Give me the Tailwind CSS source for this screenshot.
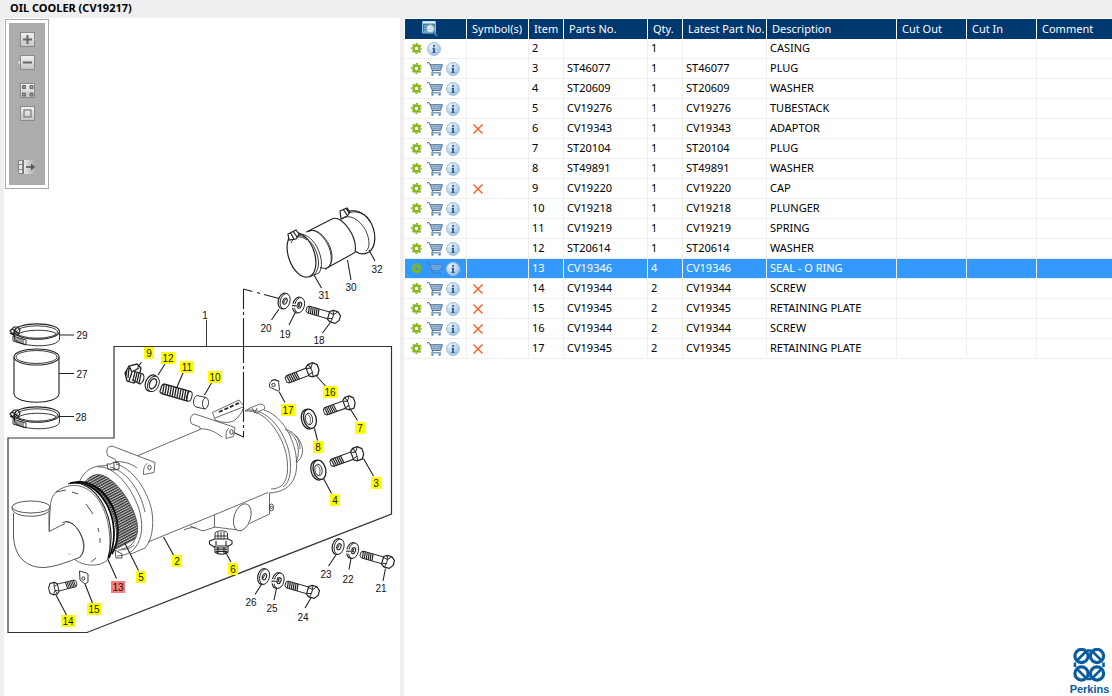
<!DOCTYPE html>
<html lang="en">
  <head>
    <meta charset="UTF-8" />
    <meta name="viewport" content="width=device-width, initial-scale=1.0" />
    <title>OIL COOLER (CV19217)</title>
    <script src="https://cdn.jsdelivr.net/npm/@tailwindcss/browser@4"></script>
  </head>
  <body class="bg-[#efefef] font-['Noto_Sans',sans-serif] text-[11px] text-black">
    <!-- shared icons -->
    <svg class="absolute size-0">
      <defs>
        <linearGradient id="btnFill" x1="0" y1="0" x2="0" y2="1">
          <stop offset="0" stop-color="#f2f2f2" />
          <stop offset="1" stop-color="#c4c4c4" />
        </linearGradient>
        <radialGradient id="infoFill" cx="0.35" cy="0.3" r="0.8">
          <stop offset="0" stop-color="#eef6fc" />
          <stop offset="1" stop-color="#94bcdc" />
        </radialGradient>
        <linearGradient id="fade" x1="0" y1="0" x2="1" y2="0">
          <stop offset="0" stop-color="#ededed" />
          <stop offset="1" stop-color="#acacac" />
        </linearGradient>
      </defs>
      <symbol id="gear" viewBox="0 0 10 10">
        <circle cx="5" cy="5" r="2.7" fill="none" stroke="#83b81a" stroke-width="2.2" />
        <circle cx="5" cy="5" r="4.3" fill="none" stroke="#83b81a" stroke-width="1.3" stroke-dasharray="1.9 1.477" stroke-dashoffset="1" />
      </symbol>
      <symbol id="cart" viewBox="0 0 16 14">
        <path d="M3 2.5h12.5l-2 6H5.5z" fill="#c3d8ee" />
        <path d="M0 .7h2.2L5.6 9l-1 1.8h9.4M3 2.7h12.5l-2 5.8H5.4" fill="none" stroke="#4c7098" />
        <path d="M3.8 4.7h11M4.6 6.6h9.4M6.5 2.7v5.8M8.8 2.7v5.8M11 2.7v5.8M13.2 2.7l-.4 5.8" fill="none" stroke="#6f94bf" stroke-width=".8" />
        <circle cx="5.4" cy="12.6" r="1.2" fill="#3f8fd0" />
        <circle cx="12.6" cy="12.6" r="1.2" fill="#3f8fd0" />
      </symbol>
      <symbol id="info" viewBox="0 0 14 14">
        <circle cx="7" cy="7" r="6.5" fill="url(#infoFill)" stroke="#a3c3dd" />
        <path d="M6 3h2v1.8H6zM5.3 5.8H8v4.2h.7v1H5.3v-1H6V6.8h-.7z" fill="#33639c" />
      </symbol>
      <symbol id="cross" viewBox="0 0 10 10">
        <path d="M.5.5l9 9M9.5.5l-9 9" fill="none" stroke="#ff5a1f" stroke-width="1.4" />
      </symbol>
    </svg>

    <div class="flex flex-col min-h-screen">
      <header class="h-[18px] pl-[10px] leading-4">
        <h1 class="font-bold">OIL COOLER (CV19217)</h1>
      </header>

      <main class="flex grow">
        <!-- drawing -->
        <section class="relative w-[400px] shrink-0 border-l-4 border-[#efefef] bg-white">
          <div class="absolute left-px top-px z-10 border border-[#a9a9a9] bg-white p-[3px]">
            <div class="flex w-9 flex-col items-center bg-[#acacac] pt-2 pb-2.5">
              <button class="mb-[7px] h-4" aria-label="Zoom in">
                <svg class="h-4 w-[18px]" viewBox="0 0 18 16">
                  <path d="M15 5l3 3-3 3z" fill="#e2e2e2" />
                  <rect x="2.5" y="1.5" width="14" height="14" fill="url(#btnFill)" stroke="#8a8a8a" />
                  <path d="M9.5 4v9M5 8.5h9" stroke="#666" stroke-width="2" />
                </svg>
              </button>
              <button class="mb-[13px] h-4" aria-label="Zoom out">
                <svg class="h-4 w-[18px]" viewBox="0 0 18 16">
                  <path d="M3 5.5l-3 3 3 3z" fill="#e2e2e2" />
                  <rect x="2.5" y="1.5" width="14" height="14" fill="url(#btnFill)" stroke="#8a8a8a" />
                  <path d="M5 8.5h9" stroke="#666" stroke-width="2" />
                </svg>
              </button>
              <button class="mb-[7px] h-4" aria-label="Fit to window">
                <svg class="h-4 w-[18px]" viewBox="0 0 18 16">
                  <rect x="2.5" y=".5" width="14" height="14" fill="url(#btnFill)" stroke="#8a8a8a" />
                  <path d="M4.5 2.5h3v3h-3zM12 2.5h3v3h-3zM4.5 10h3v3h-3zM12 10h3v3h-3z" fill="#999" stroke="#666" />
                </svg>
              </button>
              <button class="mb-[37px] h-4" aria-label="Actual size">
                <svg class="h-4 w-[18px]" viewBox="0 0 18 16">
                  <rect x="2.5" y=".5" width="14" height="14" fill="url(#btnFill)" stroke="#8a8a8a" />
                  <rect x="6" y="4" width="7" height="7" fill="none" stroke="#666" />
                </svg>
              </button>
              <button class="h-4" aria-label="Hide list">
                <svg class="h-4 w-[18px]" viewBox="0 0 18 16">
                  <rect x="5" y="1" width="12" height="14" fill="url(#fade)" />
                  <path d="M.5 1.5h4v13h-4zM.5 5.5h4M.5 10.5h4" fill="#e8e8e8" stroke="#858585" />
                  <path d="M5.5 1v14" stroke="#777" />
                  <path d="M8 8h6" stroke="#555" stroke-width="1.6" />
                  <path d="M13 4.5L17 8l-4 3.5z" fill="#555" />
                </svg>
              </button>
            </div>
          </div>

          <svg class="block w-full" viewBox="4 18 396 678" fill="none" stroke="#222" stroke-width="0.9" font-family="Liberation Sans, Arial, sans-serif" font-size="10">
            <defs>
              <g id="bolt">
                <path d="M0 -2L2 -3.5H25V3.5H2L0 2z" fill="#fff" />
                <path d="M2 -3.5l1 7M4 -3.5l1 7M6 -3.5l1 7M8 -3.5l1 7M10 -3.5l1 7M12 -3.5l1 7" stroke-width="1.2" />
                <path d="M23 -4l3 -2h5l3.500 3v5l-3 4h-5.500l-3 -2z" fill="#fff" stroke-width="1.2" />
                <path d="M26 -6l1.500 4v4l-1 4M27.500 -2l-4 -1M27.500 2l-4 1M31 -6l-3.500 4" />
              </g>
              <g id="washer">
                <ellipse rx="5.2" ry="8" fill="#fff" stroke-width="1.2" transform="translate(-1 0) rotate(14)" />
                <ellipse rx="4.8" ry="7.8" fill="#fff" transform="translate(.6 .2) rotate(14)" />
                <ellipse cx=".5" rx="2" ry="3.2" transform="rotate(20)" stroke-width="1.1" />
                <path d="M1 -2l-2 4" />
              </g>
              <g id="splitWasher">
                <use href="#washer" />
                <path d="M-7 -1l6 2M-7 2l5 1" stroke="#fff" stroke-width="1.5" />
                <path d="M-6 .5l6 .5M-1 -3l2 5" />
              </g>
              <g id="ring">
                <ellipse cx="-1" rx="6.500" ry="10" fill="#fff" stroke-width="1.3" transform="rotate(-14)" />
                <ellipse cx="1" rx="6.200" ry="9.800" fill="#fff" stroke-width="1.3" transform="rotate(-14)" />
                <ellipse rx="3.600" ry="5.800" transform="rotate(-10)" />
                <path d="M-1.500 -4.500c3 1 4 6 2 9.500" stroke-width=".7" />
              </g>
              <g id="clamp">
                <path d="M14.500 332v7c6 9 44 9 45 0v-8" fill="#fff" />
                <ellipse cx="37" cy="331.500" rx="22.500" ry="7.700" fill="#fff" stroke-width="1.2" />
                <ellipse cx="37" cy="332" rx="20.500" ry="6.200" />
                <path d="M18 334.500c5 -5.500 32 -5.500 38 -1" />
                <path d="M10 331l4 -4h4l2 3 -2 5h-4zM12 329l6 4M13 334l3 -6M10 333l5 3" stroke-width="1.2" />
                <path d="M13 336l13 4v5l-13 -4zM15 337v4.500M17 337.500v5M19 338v5M21 338.500v5M23 339v5" />
              </g>
              <pattern id="hatch" width="2.4" height="2.4" patternUnits="userSpaceOnUse" patternTransform="rotate(62)">
                <rect width="2.400" height="2.400" fill="#ddd" stroke="none" />
                <path d="M.6 0v2.400" stroke="#222" stroke-width="1.3" />
                <path d="M0 .6h2.400" stroke="#555" stroke-width=".5" />
              </pattern>
            </defs>

            <!-- boundary -->
            <path d="M114 346.500H391.500V514L87 632.500H8V438h106z" stroke="#333" stroke-width="1.2" />
            <path d="M206.500 320v26" />

            <!-- hose and clamps 27-29 -->
            <use href="#clamp" />
            <path d="M14 357v37c2 11 43 11 45 0v-37" fill="#fff" stroke-width="1.1" />
            <ellipse cx="36.500" cy="357" rx="22.500" ry="8" fill="#fff" stroke-width="1.1" />
            <ellipse cx="36.500" cy="357" rx="20.500" ry="6.500" />
            <use href="#clamp" y="83" />

            <!-- hose and clamps 30-32 -->
            <path d="M343 217c8 -8 20 -7 27 4c7 12 6 26 -1 31c-5 3 -10 2 -14 -1" stroke-width="1.2" />
            <path d="M342 219c9 -7 20 4 24 12c4 9 4 17 0 20" />
            <path d="M341 217c9 -11 22 -7 29 5" />
            <path d="M340 211l7 -3 3 4 -3 4 -6 3zM343 209l4 6M346 208l3 5" stroke-width="1.2" fill="#fff" />
            <path d="M306.500 232L333 218.500c9 -3 25 18 22 34L325 269" fill="#fff" stroke-width="1.1" />
            <path d="M306.500 232c8 -5 16 3 21 12c5 10 5 20 0 24M309 231.500c7 -4 15 4 20 13c4 9 4 17 0 23M320 267.500l7 1.500" />
            <ellipse cx="301.500" cy="255" rx="13" ry="23" transform="rotate(-19 301.500 255)" stroke-width="1.2" fill="#fff" />
            <path d="M294 238c5 -6 15 0 20 9c6 11 6 22 0 28M297 235c7 -3 15 3 20 12c5 10 6 20 2 26l-10 4M291 243c3 -7 10 -8 16 -3" />
            <path d="M288 234l8 -4 3 4 -3 5 -7 1zM290 232l4 7M293 231l4 6" stroke-width="1.2" fill="#fff" />

            <path d="M243.500 289v20M243.500 312v3M243.500 318v45M243.500 366v3M243.500 372v50M243.500 425v3M243.500 431v6l-11 -5" stroke-width="1.1" />
            <path d="M243.500 289l9 2.500M257 292.500l3 1M264 294.500l15 4" stroke-width="1.1" />

            <!-- plug, washer, spring, plunger 9-12 -->
            <path d="M125 373l4 -7 8 -2 4 4 -2 9 -5 6 -7 -2zM129 366l3 6 7 -4M132 372l-3 9M127 369l-1 7M129 368l-1 10" stroke-width="1.3" fill="#fff" />
            <path d="M133 371l10 3c2 3 1 8 -3 10l-8 -4M135 372l-2 8M137 373l-2 8M139 373l-2 9M141 374l-2 9" stroke-width="1.2" fill="#fff" />
            <g transform="translate(152.500 383.500) rotate(24)">
              <ellipse cx="-1" rx="6" ry="8.500" fill="#fff" stroke-width="1.2" />
              <ellipse cx="1" rx="5.500" ry="8" fill="#fff" />
              <ellipse cx=".5" rx="3.300" ry="5.300" stroke-width="1.3" />
            </g>
            <g transform="translate(160 388) rotate(16)" stroke-width="1.3">
              <path d="M1 -3v7M3 -4.500l1 9M5.500 -4.500l1 9M8 -4.500l1 9M10.500 -4.500l1 9M13 -4.500l1 9M15.500 -4.500l1 9M18 -4.500l1 9M20.500 -4.500l1 9M23 -4.500l1 9M25.500 -4.500l1 9M28 -4.500l1 9M1 -3l2 -2H30M1 4l3 1H30" />
              <ellipse cx="30.500" rx="2.500" ry="5" stroke-width="1" />
            </g>
            <path d="M197 395.500l9 2c4 2 3 10 -1 11.500l-9 -2c-4 -2 -3 -10 1 -11.500z" fill="#fff" />
            <path d="M206 397.500c-4 1 -5 9 -1 11.500" />

            <!-- cooler body -->
            <g stroke="#444" stroke-width="0.8">
              <path d="M137 456L200 429.500M148 542L214 515l54 -22.500M214.500 515v12l24 3M190 526l13 5 12 -4M269.500 493v21l-20 9.500" />
              <path d="M184 530c4 -2 8 -3 12 -2" />
              <ellipse cx="242.300" cy="517.300" rx="8.200" ry="14" transform="rotate(18 242.300 517.300)" fill="#fff" />
              <ellipse cx="271.500" cy="507.500" rx="2" ry="3.500" stroke="#222" /><circle cx="271.500" cy="507.500" r="1" />
              <path d="M285 429.500c6 1 12 6 15 12c3 6 3 10 2 13c-1 4 -3 6 -6 8M289 432c5 3 8 9 9 15c1 6 0 11 -2 15M294 434c4 4 6 9 6 15" />
              <path d="M245 411l5 -3 10 -4c3 0 5 1 4.500 5l-5 2 -3 3M252 408l3 5 2 -5" />
              <path d="M264 410c14 4 26 20 31 40c3 14 3 30 -9 38c-4 3 -11 5 -17 5" />
              <path d="M245 411c20 -2 36 22 41 42c3 15 2 28 -5 33c-3 2 -6 3 -10 3M247 410c20 -2 37 20 42 42c3 15 2 30 -6 35" />
              <!-- top port -->
              <path d="M212.500 412.500L239 400l4 5M215 418l28 -11M212.500 412.500l3 8M215.500 420c6 3 14 3 18 1c5 -3 8 -8 10 -13" />
              <path d="M219 412l20 -9" stroke="#222" stroke-width="1.8" stroke-dasharray="4 2" />
              <!-- mounting brackets -->
              <path d="M200 429.500v-2.500l-8 -3c-3 -2 -2 -10 3 -10L235 427.500l-1.500 9 -7.500 2c0 -5 0 -8 3 -10.500M200 429c9 -1 17 4 22 8" fill="#fff" />
              <path d="M112 446l43 16.500 -1 10 -10.500 2c0 -5 0 -8 4 -11.500M112 446c-6 0 -6 7 -4 10l7 3 2 4M115 462c8 -1 15 1 22 6" fill="#fff" />
              <g stroke="#222">
                <ellipse cx="231.500" cy="432" rx="1.700" ry="2.300" /><ellipse cx="149.500" cy="467.500" rx="1.700" ry="2.300" />
              </g>
              <!-- front flange -->
              <path d="M79 483c4 -11 12 -16 20 -17l8 -.5M116 464c16 4 32 26 36 48c2 14 0 28 -7 36l-14 6" />
              <path d="M98 467c16 -2 36 22 42 46c4 16 1 30 -8 38c-4 3 -9 5 -15 5M110 467c16 4 30 22 35 45" />
              <path d="M107 464h4l3 -2 5 1v6l-5 1 -6 -1zM114 462v8M115 550l7 4v4h-6z" stroke="#222" />
              <!-- tube stack -->
              <path d="M84 483c7 -9 15 -11 24 -5c14 9 25 28 29 44c1 7 1 12 -2 17l-19 10c4 -26 -8 -58 -32 -66z" fill="url(#hatch)" />
              <path d="M135 538c-1 6 -6 10 -14 11M118 550c6 0 12 -1 16 -5" />
              <!-- dome -->
              <path d="M50 511c0 -12 3 -20 15 -24c26 -9 50 22 44 71c-6 9 -25 10 -36 0L49 532z" fill="#fff" />
              <path d="M56 492l10 -2M72 492l6 2M86 504l7 10M98 528l1 4M100 538v5M91 562l5 -4" stroke="#222" />
            </g>
            <path d="M68 484c26 -8 52 34 40 74" stroke-width="1.2" />
            <path d="M70 483c30 -6 55 38 39 75" stroke="#000" stroke-width="1.7" />
            <path d="M76 482c30 -3 53 40 36 72" stroke="#000" stroke-width="1.7" />
            <path d="M80 482c26 3 46 40 35 67" />
            <!-- elbow -->
            <g stroke="#444">
              <path d="M62 523l18 34 -31 -10v-16z" fill="#fff" stroke="none" />
              <path d="M49 511v20.500l16 -8v30l15 3.500c-12 4.500 -24 9.500 -35 10c-18 1 -30.500 -9 -31.500 -31v-23" fill="#fff" stroke="none" />
              <path d="M13.500 513v23c1 22 14 32 31 31.500c12 -1 24 -6 36 -10.500M49 511v20.500l16 -8" />
              <path d="M62 523c4 -3 12 0 16 7c6 9 8 20 2 27M65 521.500c10 -1 18 14 19 23c0 6 -1 10 -4 12" />
              <path d="M12 508c0 11 38 11 38 0v-1H12z" fill="#fff" />
              <ellipse cx="31" cy="507" rx="19" ry="6" fill="#fff" />
            </g>

            <!-- drain fitting 6 -->
            <g fill="#fff">
              <path d="M215 533c3 -3 10 -3 12.500 0v8H215zM218 532v8M221 532v8M224 532v8M215 536h12" />
              <path d="M209.500 541l5 -2h14l3.500 2v3l-5 3h-13l-4.500 -3zM216 545v-4M226 546v-5" stroke-width="1.1" />
              <path d="M215 546v6c3 3 10 3 13 0v-6zM216 548h11M216 549.800h11M216 551.500h11M218 547v6M224 547v6" stroke-width="1.1" />
            </g>

            <!-- retaining plates 15, 17 -->
            <path d="M269.500 387c-1 -6 5 -9 9 -6l1 9 -1.500 1zM271 381l3 -1.500 5 2" fill="#fff" /><circle cx="273.500" cy="385" r="1.700" />
            <path d="M79.500 571l7 2 1.500 1v8l-3 2 -5 -4z" fill="#fff" /><circle cx="83.300" cy="578.500" r="1.600" />

            <!-- washers -->
            <use href="#washer" x="284.500" y="301" />
            <use href="#splitWasher" x="299" y="305" />
            <use href="#washer" x="338.500" y="546.500" />
            <use href="#splitWasher" x="353" y="550.500" />
            <use href="#washer" x="264" y="576.500" />
            <use href="#splitWasher" x="278.500" y="580.500" />
            <use href="#ring" x="309" y="419" />
            <use href="#ring" x="318.500" y="470" />

            <!-- bolts -->
            <use href="#bolt" transform="translate(306.500 309) rotate(16)" />
            <use href="#bolt" transform="translate(360.500 554) rotate(16)" />
            <use href="#bolt" transform="translate(285.500 584) rotate(16)" />
            <use href="#bolt" transform="translate(286 380) rotate(-21) scale(1 1.1)" />
            <use href="#bolt" transform="translate(324 412) rotate(-20) scale(.94 1.1)" />
            <use href="#bolt" transform="translate(330.500 463.500) rotate(-20) scale(1 1.1)" />
            <use href="#bolt" transform="translate(76.500 583) rotate(166) scale(.82 1)" />

            <!-- leader lines -->
            <path stroke-width="1.1" d="M60 335h14M59 373.500h15M60 416.500h14M314 275l7.500 13M347.500 260l3.500 20M369 250l6 11M279 309l-7.500 11M295.500 312l-6.500 13M330 323l-7.500 10M141.500 362l-4 5.500M165 364l-7 11M183 373l-6 14M211.500 383l-7 12M316.500 376l9 10M279 391.500l6 11M314.500 428.500l3 12M350 408.500l7.500 12M363.500 458.500l10 17.500M323.500 478.500l8 15M163.500 537l10 18M125 543.500l13.500 27M107.500 558.500l9 20M85 584l7.500 19M56 595l10.500 20M225 551l6 11M336 555l-7.500 11M351 558.500l-2 11M385.500 568.500l-2.500 12.500M261.500 584.500l-6.500 10M276.500 588.500l-2.500 11.500M311.500 597l-6.500 11" />

            <g id="callouts" stroke="none" fill="#111" text-anchor="middle"></g>
          </svg>
        </section>

        <!-- parts list -->
        <section class="ml-1 flex min-w-0 grow flex-col border-t border-l border-white bg-white">
          <table class="w-full table-fixed border-separate border-spacing-0">
            <colgroup>
              <col class="w-[62px]" />
              <col class="w-[62px]" />
              <col class="w-[35px]" />
              <col class="w-[84px]" />
              <col class="w-[35px]" />
              <col class="w-[84px]" />
              <col class="w-[130px]" />
              <col class="w-[70px]" />
              <col class="w-[70px]" />
              <col />
            </colgroup>
            <thead>
              <tr class="h-5 bg-[#003870] text-left whitespace-nowrap text-white *:border-r *:border-white *:p-0 *:pl-[5px] *:font-normal *:last:border-r-0">
                <th>
                  <svg class="ml-3 block size-4" viewBox="0 0 16 16" role="img" aria-label="Details">
                    <path d="M.5.5h13v11.500H.5z" fill="#2f7fb5" stroke="#8cc4e4" />
                    <path d="M1 1.500h12" stroke="#e6f3fb" stroke-width="2" />
                    <path d="M2 5h3M2 7.500h2M2 10h3" stroke="#a8d4ee" />
                    <path d="M11 11l4 4" stroke="#3c7ba8" stroke-width="2.4" />
                    <circle cx="8.300" cy="7.700" r="4.100" fill="#cfdfe9" stroke="#8199ab" stroke-width="1.2" />
                    <path d="M6 7c.5 -1.500 1.500 -2 3 -2" fill="none" stroke="#fff" />
                  </svg>
                </th>
                <th>Symbol(s)</th>
                <th>Item</th>
                <th>Parts No.</th>
                <th>Qty.</th>
                <th>Latest Part No.</th>
                <th>Description</th>
                <th>Cut Out</th>
                <th>Cut In</th>
                <th>Comment</th>
              </tr>
            </thead>
            <tbody id="parts"></tbody>
          </table>

          <svg class="mt-auto mr-[2px] h-12 w-10 self-end" viewBox="0 0 40 48" role="img" aria-label="Perkins">
            <g fill="none" stroke="#0b5ba1" stroke-width="3.2">
              <circle cx="11.500" cy="8" r="6.600" /><circle cx="27" cy="8" r="6.600" />
              <circle cx="11.500" cy="25.500" r="6.600" /><circle cx="27" cy="25.500" r="6.600" />
              <path d="M7 12.500l9 -9M22.500 3.500l9 9M7 21l9 9M22.500 30l9 -9" stroke-width="2.6" />
              <path d="M17 2.500h4.500M17 31h4.500M5 14.500v4.500M33.500 14.500v4.500" stroke-width="2.6" />
            </g>
            <text x="19.500" y="45" text-anchor="middle" font-family="Liberation Sans, Arial, sans-serif" font-size="11" font-weight="bold" fill="#0b5ba1">Perkins</text>
          </svg>
        </section>
      </main>
    </div>

    <script>
      // item, part no., qty, description, has symbol
      const parts = [
        [2, "", 1, "CASING", false],
        [3, "ST46077", 1, "PLUG", false],
        [4, "ST20609", 1, "WASHER", false],
        [5, "CV19276", 1, "TUBESTACK", false],
        [6, "CV19343", 1, "ADAPTOR", true],
        [7, "ST20104", 1, "PLUG", false],
        [8, "ST49891", 1, "WASHER", false],
        [9, "CV19220", 1, "CAP", true],
        [10, "CV19218", 1, "PLUNGER", false],
        [11, "CV19219", 1, "SPRING", false],
        [12, "ST20614", 1, "WASHER", false],
        [13, "CV19346", 4, "SEAL - O RING", false],
        [14, "CV19344", 2, "SCREW", true],
        [15, "CV19345", 2, "RETAINING PLATE", true],
        [16, "CV19344", 2, "SCREW", true],
        [17, "CV19345", 2, "RETAINING PLATE", true],
      ];
      const selected = 13;

      // number, centre x, centre y
      const plain = [
        [1, 205, 315], [29, 82, 335], [27, 82, 374], [28, 81, 417],
        [31, 324, 295], [30, 351, 287], [32, 377, 269],
        [20, 266, 328], [19, 285, 334], [18, 319, 340],
        [23, 326, 574], [22, 348, 579], [21, 381, 588],
        [26, 251, 602], [25, 272, 608], [24, 303, 617],
      ];
      const marked = [
        [9, 149, 353], [12, 168, 358], [11, 187, 367], [10, 215, 377],
        [16, 330, 392], [17, 288, 410], [8, 318, 447], [7, 360, 428],
        [3, 376, 483], [4, 335, 500], [2, 177, 561], [5, 141, 577],
        [13, 118, 587], [15, 94, 609], [14, 68, 621], [6, 233, 569],
      ];

      const label = ([n, x, y]) => `<text x="${x}" y="${y + 4}">${n}</text>`;
      document.querySelector("#callouts").innerHTML =
        plain.map(label).join("") +
        marked
          .map((m) => {
            const w = m[0] > 9 ? 14 : 10;
            const color = m[0] === selected ? "#f97b7b" : "#ffff00";
            return `<rect x="${m[1] - w / 2}" y="${m[2] - 6}" width="${w}" height="12" fill="${color}" />${label(m)}`;
          })
          .join("");

      document.querySelector("#parts").innerHTML = parts
        .map(([item, no, qty, desc, symbol]) => {
          const row = item === selected ? "bg-[#3399ff] text-white" : "";
          const cart = no
            ? `<button class="mr-[3px]" aria-label="Add ${no} to cart"><svg class="block h-3.5 w-4 ${item === selected ? "opacity-60" : ""}"><use href="#cart" /></svg></button>`
            : "";
          return `
            <tr class="h-5 whitespace-nowrap *:border-r *:border-b *:border-[#efefef] *:p-0 *:pl-[3px] *:last:border-r-0 ${row}">
              <td>
                <div class="flex items-center pl-[3px]">
                  <button class="mr-[5px]" aria-label="Options"><svg class="block size-[11px]"><use href="#gear" /></svg></button>
                  ${cart}<button aria-label="Information"><svg class="block size-3.5"><use href="#info" /></svg></button>
                </div>
              </td>
              <td>${symbol ? '<svg class="ml-[3px] block size-2.5" role="img" aria-label="Symbol"><use href="#cross" /></svg>' : ""}</td>
              <td>${item}</td>
              <td>${no}</td>
              <td>${qty}</td>
              <td>${no}</td>
              <td>${desc}</td>
              <td></td>
              <td></td>
              <td></td>
            </tr>`;
        })
        .join("");
    </script>
  </body>
</html>
